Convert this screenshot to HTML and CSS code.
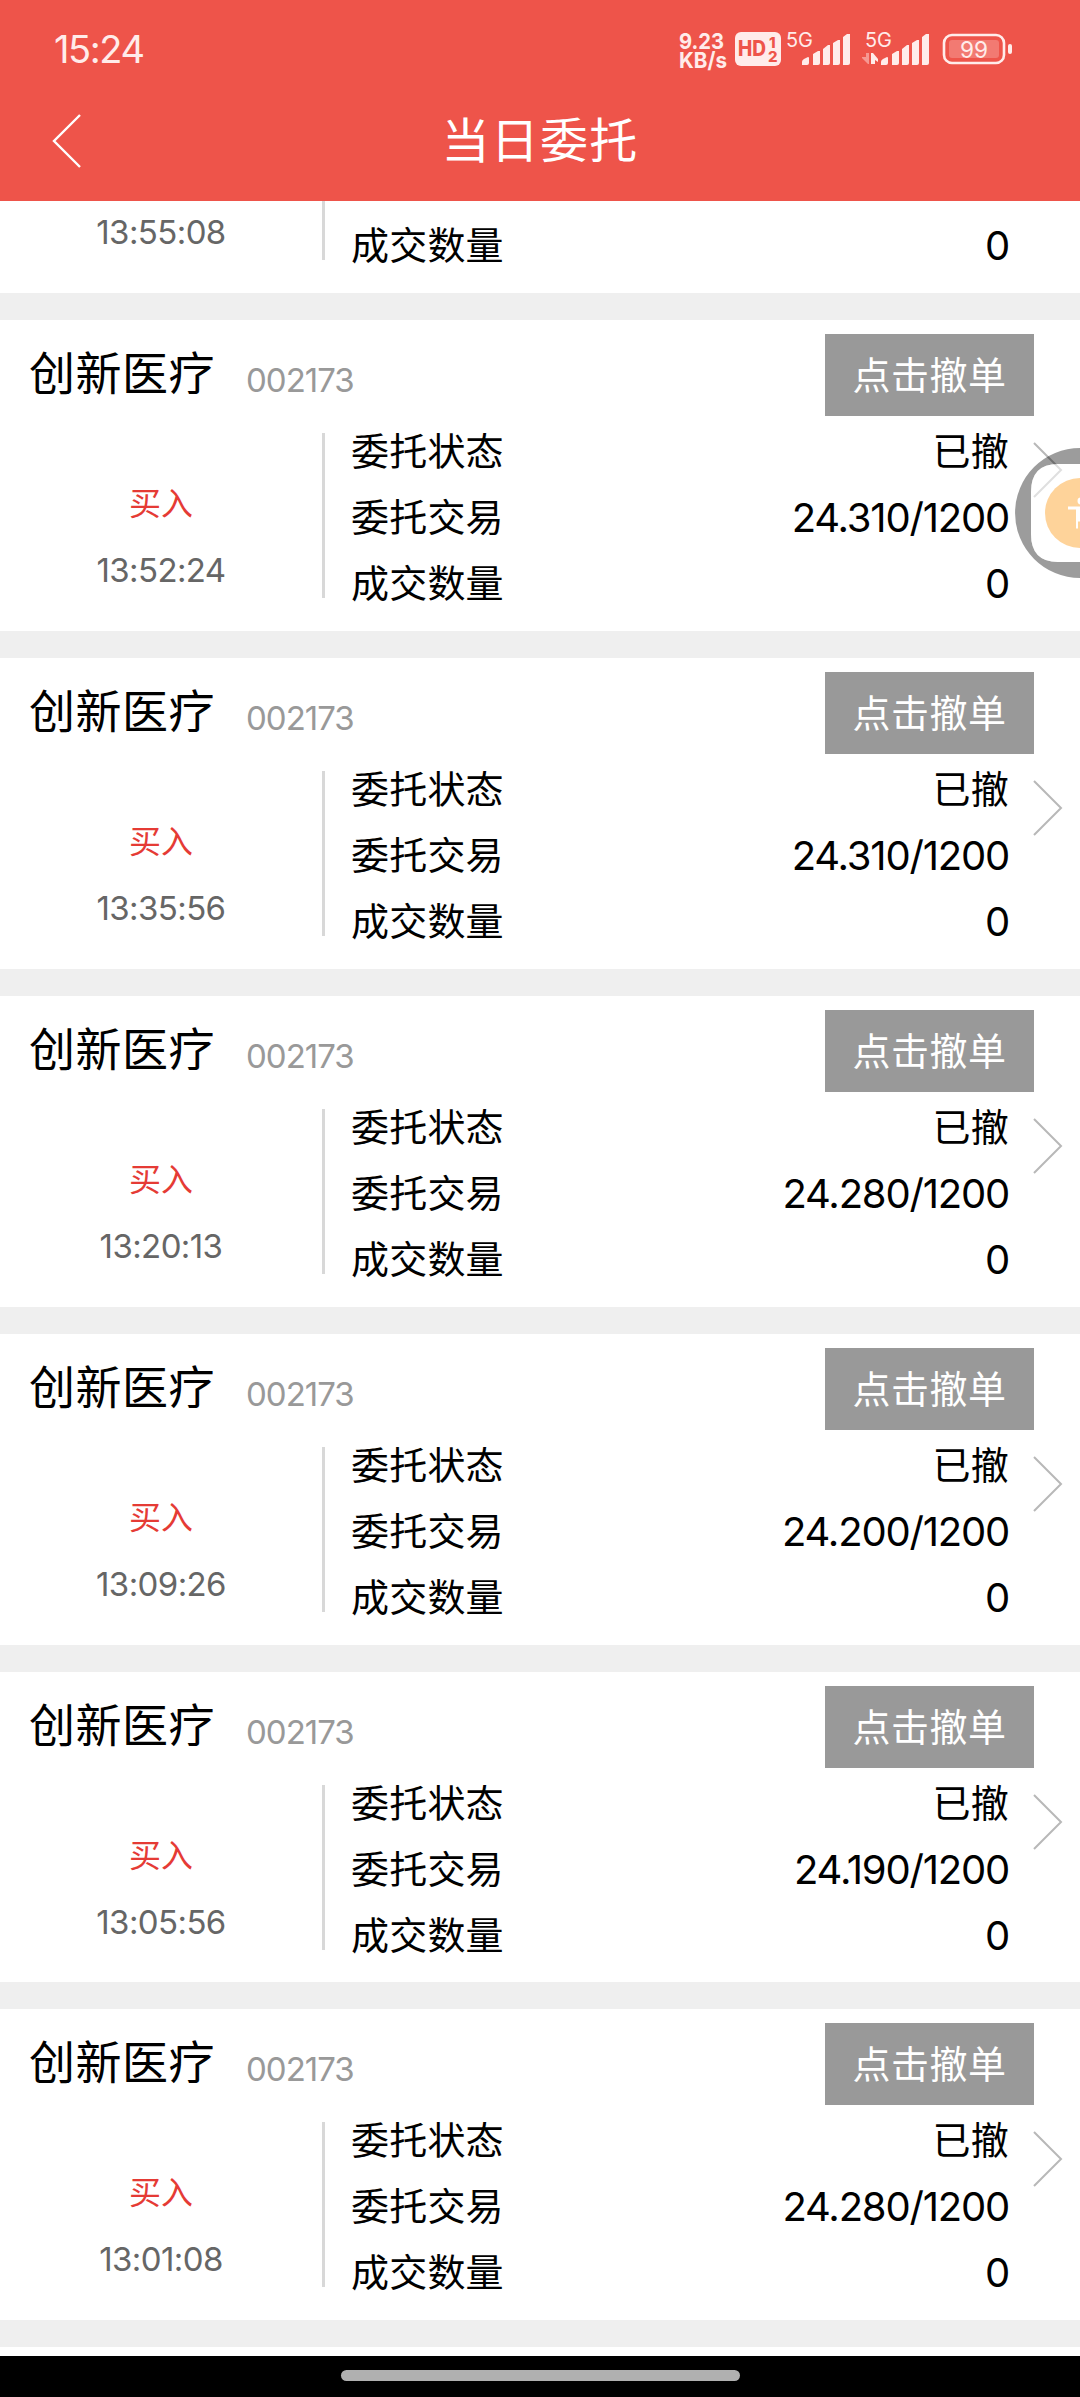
FILE: index.html
```html
<!DOCTYPE html>
<html lang="zh-CN">
<head>
<meta charset="utf-8">
<title>当日委托</title>
<link rel="stylesheet" href="styles.css">
</head>
<body>
<div class="screen">
  <header class="top">
    <div class="status">
      <span class="clock">15:24</span>
      <svg class="status-icons" width="360" height="60" viewBox="670 20 360 60">
        <g fill="#ffecea">
          <text class="net" x="679" y="49" textLength="45" lengthAdjust="spacingAndGlyphs">9.23</text>
          <text class="net" x="679" y="67.500" textLength="48" lengthAdjust="spacingAndGlyphs">KB/s</text>
          <rect x="735" y="32" width="46" height="34" rx="6"/>
          <text class="hd" x="738" y="56" textLength="28" lengthAdjust="spacingAndGlyphs">HD</text>
          <text class="hd-n" x="769" y="47.500">1</text>
          <text class="hd-n" x="768" y="61.500">2</text>
          <text class="g5" x="786" y="47" textLength="27" lengthAdjust="spacingAndGlyphs">5G</text>
          <text class="g5" x="865" y="47" textLength="27" lengthAdjust="spacingAndGlyphs">5G</text>
          <path id="bars" d="M802 65v-3q0-2 2-3l4-2q1 0 1 1v5q0 2-2 2zM813 65V54l5-3h2v12q0 2-2 2zM823 65V49l5-4h2v18q0 2-2 2zM833 65V43l5-3h2v23q0 2-2 2zM843 65V37l4-3h3v29q0 2-2 2z"/>
          <use href="#bars" x="79"/>
          <path d="M871 53h2l5 6v3l-3-2v4h-4z"/>
          <path d="M869 53v11h-1l-6-6v-1h4v-4z" opacity=".45"/>
          <rect x="949" y="40" width="50" height="18" rx="3" opacity=".25"/>
          <rect x="944" y="35" width="60" height="28" rx="8" fill="none" stroke="#ffecea" stroke-width="2.6"/>
          <rect x="1008" y="44" width="4" height="10" rx="2"/>
          <text class="pct" x="960" y="57.500" textLength="28" lengthAdjust="spacingAndGlyphs">99</text>
        </g>
      </svg>
    </div>
    <div class="bar">
      <svg class="back" width="32" height="56" viewBox="0 0 32 56"><path d="M29 2L3 28L29 54"/></svg>
      <h1 class="title">当日委托</h1>
    </div>
  </header>

  <main class="list" id="list"></main>

  <footer class="nav"><div class="pill"></div></footer>

  <svg class="float" width="66" height="132" viewBox="1014 447 66 132">
    <path fill="#000" fill-opacity=".39" d="M1080 448a65 65 0 0 0 0 130v-16h-22q-27 0-27-28v-42q0-28 27-28h22z"/>
    <path fill="#fff" fill-opacity=".55" d="M1080 464h-22q-27 0-27 28v42q0 28 27 28h22z"/>
    <circle cx="1080" cy="513" r="35" fill="#fed39a"/>
    <path d="M1068 506.500h12v15h-2v7h-2v-19h-8z" fill="#fff"/>
    <circle cx="1081" cy="501" r="3.500" fill="#fff"/>
  </svg>
</div>
<script src="app.js"></script>
</body>
</html>
```
FILE: styles.css
```css
* { box-sizing: border-box; margin: 0; padding: 0; }
body { background: #fff; font-family: Inter, "Noto Sans CJK SC", sans-serif; }
.screen { position: relative; width: 1080px; height: 2397px; overflow: hidden; display: flex; flex-direction: column; }
.top { flex: none; height: 201px; background: #ee544a; color: #fff; }
.status { height: 98px; padding: 0 50px 0 54px; display: flex; justify-content: space-between; }
.clock { line-height: 98px; font-size: 38px; letter-spacing: -1.4px; color: #ffecea; }
.status-icons { margin-top: 20px; }
.net { font-size: 22px; font-weight: 700; }
.hd { font-size: 21px; font-weight: 800; fill: #ee544a; }
.hd-n { font-size: 15px; font-weight: 800; fill: #ee544a; }
.g5 { font-size: 20px; }
.pct { font-size: 23px; }
.bar { height: 86px; display: grid; grid-template-columns: 100px 1fr 100px; align-items: center; }
.back { margin-left: 51px; fill: none; stroke: #fff; stroke-width: 2.4; }
.title { margin-top: -8px; font: 400 48px/78px "Noto Sans CJK SC", sans-serif; letter-spacing: 1.3px; text-align: center; }
.list { flex: 1; min-height: 0; background: #efefef; display: flex; flex-direction: column; gap: 27px; }
.card { flex: none; height: 311px; background: #fff; }
.card.short { height: 310px; }
.card.partial { height: 92px; }
.card.next { height: 9px; }
.head { height: 113px; padding: 14px 46px 0 29px; display: flex; align-items: flex-start; }
.name { font-size: 46px; line-height: 79px; letter-spacing: .5px; }
.code { margin-left: 31px; font-size: 33px; line-height: 92px; color: #999; letter-spacing: -1px; }
.cancel { margin-left: auto; padding-bottom: 4px; width: 209px; height: 82px; background: #999; color: #fff; border: 0; font: 38px/78px "Noto Sans CJK SC", sans-serif; letter-spacing: .5px; text-align: center; }
.body { height: 165px; display: grid; grid-template: 165px / 322px 687px 1fr; }
.partial .body { height: 59px; grid-template-rows: 59px; }
.side { display: flex; flex-direction: column; align-items: center; padding-top: 45px; }
.partial .side { padding-top: 5px; }
.buy { font-size: 32px; line-height: 52px; margin-bottom: 14px; color: #e53b35; }
.time { font-size: 33px; line-height: 52px; color: #666; letter-spacing: -.6px; }
.rows { border-left: 3px solid #d8d8d8; padding-left: 26px; }
.row { position: relative; top: -15px; height: 66px; line-height: 66px; font-size: 38px; letter-spacing: .2px; color: #000; display: flex; justify-content: space-between; }
.partial .row { top: 11px; }
.num { font-size: 40px; line-height: 68px; letter-spacing: -1.2px; }
.arrow { margin: 9px 0 0 24px; fill: none; stroke: #b8b8b8; stroke-width: 2; }
.nav { flex: none; height: 41px; background: #000; display: flex; justify-content: center; padding-top: 14px; }
.pill { width: 399px; height: 11px; border-radius: 6px; background: #b0b0b0; }
.float { position: absolute; right: 0; top: 447px; }
```
FILE: app.js
```js
const orders = [
  ["13:52:24", "24.310"], ["13:35:56", "24.310"], ["13:20:13", "24.280"],
  ["13:09:26", "24.200"], ["13:05:56", "24.190", "short"], ["13:01:08", "24.280"]
];
const filled = `<div class="row"><span>成交数量</span><span class="num">0</span></div>`;
const scrolled = `
  <section class="card partial">
    <div class="body">
      <div class="side"><span class="time">13:55:08</span></div>
      <div class="rows">${filled}</div>
    </div>
  </section>`;
document.getElementById("list").innerHTML = scrolled + orders.map(([time, price, size = ""]) => `
  <section class="card ${size}">
    <div class="head"><span class="name">创新医疗</span><span class="code">002173</span><button class="cancel">点击撤单</button></div>
    <div class="body">
      <div class="side"><span class="buy">买入</span><span class="time">${time}</span></div>
      <div class="rows">
        <div class="row"><span>委托状态</span><span>已撤</span></div>
        <div class="row"><span>委托交易</span><span class="num">${price}/1200</span></div>
        ${filled}
      </div>
      <svg class="arrow" width="30" height="56" viewBox="0 0 30 56"><path d="M1 1L28 28L1 55"/></svg>
    </div>
  </section>`).join("") + `<section class="card next"></section>`;
```
